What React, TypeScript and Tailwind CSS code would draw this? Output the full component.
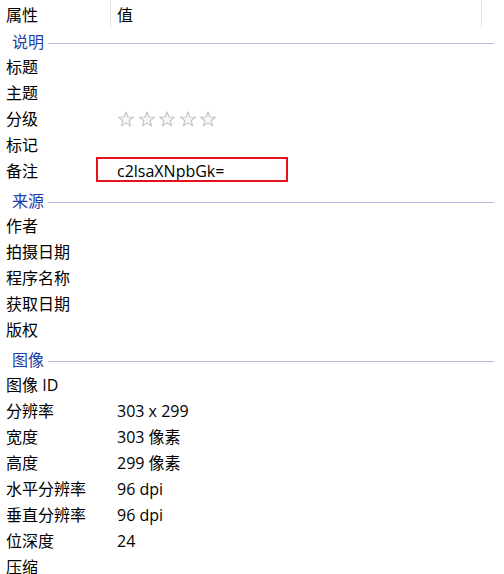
import React from "react";

type Row = { label: string; value?: string; kind?: "stars" | "note" };
type Group = { title: string; rows: Row[] };

const groups: Group[] = [
  {
    title: "说明",
    rows: [
      { label: "标题" },
      { label: "主题" },
      { label: "分级", kind: "stars" },
      { label: "标记" },
      { label: "备注", value: "c2lsaXNpbGk=", kind: "note" },
    ],
  },
  {
    title: "来源",
    rows: [
      { label: "作者" },
      { label: "拍摄日期" },
      { label: "程序名称" },
      { label: "获取日期" },
      { label: "版权" },
    ],
  },
  {
    title: "图像",
    rows: [
      { label: "图像 ID" },
      { label: "分辨率", value: "303 x 299" },
      { label: "宽度", value: "303 像素" },
      { label: "高度", value: "299 像素" },
      { label: "水平分辨率", value: "96 dpi" },
      { label: "垂直分辨率", value: "96 dpi" },
      { label: "位深度", value: "24" },
      { label: "压缩" },
    ],
  },
];

function Star() {
  return (
    <svg width="18" height="18" viewBox="0 0 24 24">
      <polygon
        points="12,2.5 14.6,9.3 21.8,9.6 16.2,14.1 18.1,21.2 12,17.2 5.9,21.2 7.8,14.1 2.2,9.6 9.4,9.3"
        fill="#f7f7f7"
        stroke="#c2c2c2"
        strokeWidth="1.5"
        strokeLinejoin="round"
      />
    </svg>
  );
}

function Stars() {
  return (
    <div className="flex gap-[2.5px]">
      {[0, 1, 2, 3, 4].map((i) => (
        <Star key={i} />
      ))}
    </div>
  );
}

function PropRow({ row }: { row: Row }) {
  return (
    <div className="relative flex h-[26px] items-center">
      <div className="w-[111px] pl-[6px] whitespace-nowrap">{row.label}</div>
      <div className="pl-[6px] whitespace-nowrap">
        {row.kind === "stars" ? <Stars /> : row.value}
      </div>
      {/* red annotation box */}
      {row.kind === "note" && (
        <div className="absolute left-[96px] top-[-1px] w-[192px] h-[25px] border-2 border-[#e8101a]" />
      )}
    </div>
  );
}

export default function App() {
  return (
    <div className="w-[504px] h-[574px] overflow-hidden bg-white text-black text-[16px] leading-none font-['Open_Sans','Noto_Sans_CJK_SC',sans-serif]">
      {/* Header */}
      <div className="flex h-[25px]">
        <div className="w-[111px] h-[27px] flex items-center pl-[6px] pt-[3px] border-r border-[#e3e3e3]">
          属性
        </div>
        <div className="w-[371px] h-[27px] flex items-center pl-[6px] pt-[3px] border-r border-[#e3e3e3]">
          值
        </div>
      </div>

      {groups.map((g) => (
        <div key={g.title}>
          <div className="flex h-[29px] items-center pt-[4px]">
            <div className="pl-[12px] text-[#1c3ea8]">{g.title}</div>
            <div className="flex-1 self-start mt-[14px] h-px bg-[#b3badf] ml-[4px] mr-[10px]" />
          </div>
          {g.rows.map((r) => (
            <PropRow key={r.label} row={r} />
          ))}
        </div>
      ))}
    </div>
  );
}
